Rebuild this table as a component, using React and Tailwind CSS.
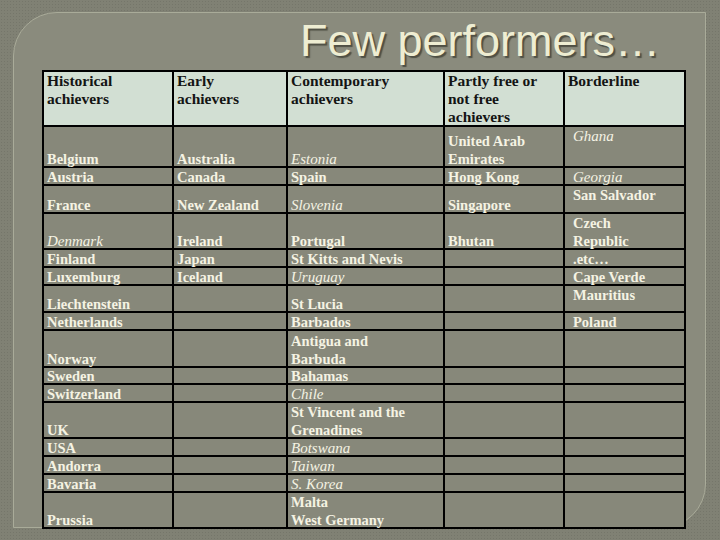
import React from 'react';

const header = [
  ['Historical', 'achievers'],
  ['Early', 'achievers'],
  ['Contemporary', 'achievers'],
  ['Partly free or', 'not free', 'achievers'],
  ['Borderline'],
];

// each cell: array of [text, italic]
const rows = [
  [[['Belgium']], [['Australia']], [['Estonia', 1]], [['United Arab'], ['Emirates']], [['Ghana', 1]]],
  [[['Austria']], [['Canada']], [['Spain']], [['Hong Kong']], [['Georgia', 1]]],
  [[['France']], [['New Zealand']], [['Slovenia', 1]], [['Singapore']], [['San Salvador']]],
  [[['Denmark', 1]], [['Ireland']], [['Portugal']], [['Bhutan']], [['Czech'], ['Republic']]],
  [[['Finland']], [['Japan']], [['St Kitts and Nevis']], [], [['.etc…']]],
  [[['Luxemburg']], [['Iceland']], [['Uruguay', 1]], [], [['Cape Verde']]],
  [[['Liechtenstein']], [], [['St Lucia']], [], [['Mauritius']]],
  [[['Netherlands']], [], [['Barbados']], [], [['Poland']]],
  [[['Norway']], [], [['Antigua and'], ['Barbuda']], [], []],
  [[['Sweden']], [], [['Bahamas']], [], []],
  [[['Switzerland']], [], [['Chile', 1]], [], []],
  [[['UK']], [], [['St Vincent and the'], ['Grenadines']], [], []],
  [[['USA']], [], [['Botswana', 1]], [], []],
  [[['Andorra']], [], [['Taiwan', 1]], [], []],
  [[['Bavaria']], [], [['S. Korea', 1]], [], []],
  [[['Prussia']], [], [['Malta'], ['West Germany']], [], []],
];

const Cell = ({ lines, last }) => (
  <div
    className={
      'bg-[#87887a] flex flex-col overflow-visible ' +
      (last ? 'justify-start pl-[8px]' : 'justify-end pl-[3px]')
    }
  >
    <div className={last ? '' : 'mb-[-2px]'}>
      {lines.map(([t, it], i) => (
        <div
          key={i}
          className={
            'leading-[18px] whitespace-nowrap text-[#f5f3e3] ' +
            (it ? 'italic font-normal text-[15px]' : 'font-bold')
          }
        >
          {t}
        </div>
      ))}
    </div>
  </div>
);

const App = () => {
  return (
    <div className="w-[720px] h-[540px] overflow-hidden bg-[#808174] bg-[radial-gradient(circle,#75766a_1px,transparent_1px)] bg-[length:3px_3px] pt-[12px] pl-[13px]">
      {/* Slide panel */}
      <div className="w-[693px] h-[516px] border border-[#a9ab99] rounded-tl-[44px] rounded-br-[44px] bg-[#8a8b7d] pl-[28px]">
        {/* Title */}
        <div className="mt-[5px] pl-[258px] h-[45px] text-[45px] leading-[45px] text-[#eeedd2] font-['Liberation_Sans',Arial,sans-serif] [text-shadow:2px_2px_1px_rgba(40,40,30,0.6)] whitespace-nowrap">
          Few performers…
        </div>

        {/* Table */}
        <div className="mt-[7px] w-[644px] p-[2px] bg-black grid gap-[2px] grid-cols-[128px_112px_155px_118px_119px] grid-rows-[53px_39px_16px_26px_34px_16px_16px_25px_16px_35px_15px_16px_34px_16px_16px_16px_34px] font-['Liberation_Serif','Times_New_Roman',serif] text-[14.5px]">
          {header.map((lines, i) => (
            <div key={i} className="bg-[#d2dfd3] pl-[3px]">
              {lines.map((t, j) => (
                <div key={j} className="leading-[18px] font-bold text-[15.5px] text-[#141414] whitespace-nowrap">
                  {t}
                </div>
              ))}
            </div>
          ))}
          {rows.map((r, ri) =>
            r.map((lines, ci) => <Cell key={ri + '-' + ci} lines={lines} last={ci === 4} />)
          )}
        </div>
      </div>
    </div>
  );
};

export default App;
